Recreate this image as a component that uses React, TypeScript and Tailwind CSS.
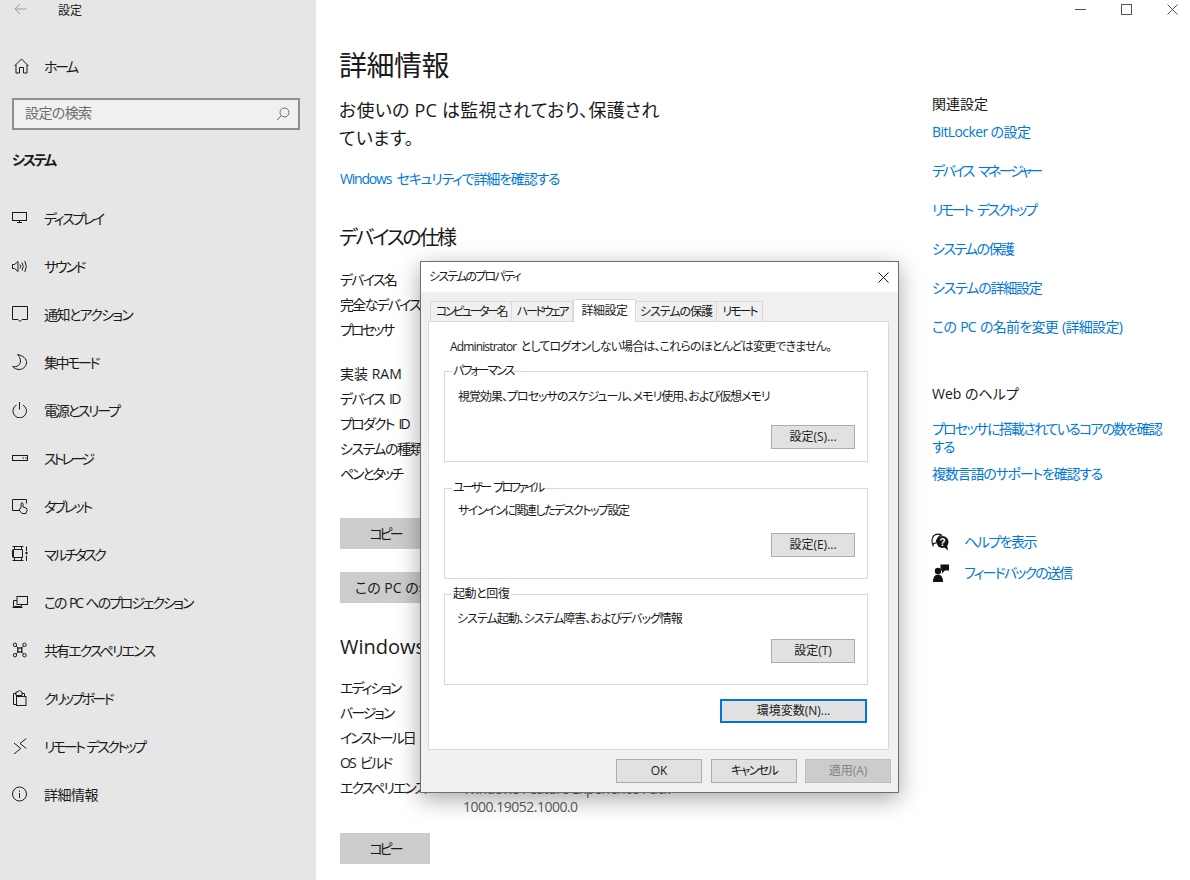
import React from "react";

const S = ({ children, w = 16, h = 16 }: { children: React.ReactNode; w?: number; h?: number }) => (
  <svg width={w} height={h} viewBox={`0 0 ${w} ${h}`} fill="none" stroke="#1a1a1a" strokeWidth="1" className="shrink-0">
    {children}
  </svg>
);

const nav: [string, React.ReactNode, string][] = [
  ["ディスプレイ", <S><rect x=".5" y="2.5" width="14" height="8" /><path d="M7.5 10.500v2M5 12.500h5" /></S>, "tracking-[-2.400px]"],
  ["サウンド", <S><path d="M.5 6.500h2L6 3.500v10l-3.500-3H.5z" /><path d="M8 6.500q1.500 2 0 4M10 4.500q2.500 4 0 8M12.800 3q3 5.500 0 11" /></S>, "tracking-[-2.300px]"],
  ["通知とアクション", <S><path d="M.5.5h15v13h-5.500L8 15.500 6 13.500H.5z" /></S>, "tracking-[-1.600px]"],
  ["集中モード", <S><path d="M5.500.5C11 1.500 15 5 14.500 9 14 13 10.500 15.500 7 15.500 4 15.500 2 14 .7 12.500 5 13.500 8.500 11 8.500 7 8.500 4.500 7.500 2.500 5.500.5z" /></S>, "tracking-[-2.400px]"],
  ["電源とスリープ", <S><path d="M7.500 0v7.500" /><path d="M4.500 3a6.800 6.800 0 1 0 6.400 0" /></S>, "tracking-[-2.200px]"],
  ["ストレージ", <S><rect x=".5" y="5.500" width="15" height="5" /><path d="M10.500 8h1.500M13 8h1.500" /></S>, "tracking-[-3px]"],
  ["タブレット", <S><path d="M8 12.500H.5v-11h14v4" /><path d="M9 10V5.500q1-1.500 2 0V9l3 1q1.500 .7 1 2.500l-1 3h-4l-3-3.500q.2-1.500 2-1.500" fill="#e6e6e6" /></S>, "tracking-[-2.400px]"],
  ["マルチタスク", <S><path d="M.5.5h11M.5 14.500h11M1.500 3.500h9v8h-9zM.5 3.500v8M2.500 1v2.500M9.500 1v2.500M2.500 11.500v3M9.500 11.500v3" /><path d="M14.500.5v4.500M14.500 9.500v5.500" /><circle cx="14.500" cy="7" r="1.200" fill="#1a1a1a" stroke="none" /></S>, "tracking-[-2.600px]"],
  ["この PC へのプロジェクション", <S><rect x="5" y="2.500" width="10.500" height="8" /><path d="M5 6.500H1.500v6h8V10.500M.5 13.500h10" /></S>, "tracking-[-2.100px] [word-spacing:2px]"],
  ["共有エクスペリエンス", <S><circle cx="3" cy="2.800" r="1.700" /><circle cx="12.500" cy="2.800" r="1.700" /><circle cx="3" cy="13.200" r="1.700" /><circle cx="12.500" cy="13.200" r="1.700" /><rect x="5.800" y="6" width="4" height="4" strokeWidth="1.300" /><path d="M4.200 4.200l2 2M11.300 4.200l-2 2M4.200 11.800l2-2M11.300 11.800l-2-2" /></S>, "tracking-[-1.900px]"],
  ["クリップボード", <S><path d="M4 3.500H1.500v11H4M10 3.500h2.500V6" /><path d="M4 3.500V2h2q.5-1.500 1.500-1.500T9.500 2H10v3.500H4z" /><rect x="4.500" y="6.500" width="9.500" height="9" /></S>, "tracking-[-2.600px]"],
  ["リモート デスクトップ", <S><path d="M2 5l6.800 5.500L2 16" /><path d="M14.300.5 8 5.500l6.300 5" /></S>, "tracking-[-2.500px] [word-spacing:2px]"],
  ["詳細情報", <S><circle cx="7.500" cy="8" r="7" /><path d="M7.500 7v5M7.500 4.500v1.200" /></S>, "tracking-[-0.5px]"],
];

const Btn = ({ label, w = "w-[84px]", t = "" }: { label: string; w?: string; t?: string }) => (
  <div className={`${w} ${t} h-6 border border-[#adadad] bg-[#e1e1e1] flex items-center justify-center text-[12px] text-[#1a1a1a]`}>{label}</div>
);

const Group = ({ legend, lt, text, tt, btn, mt, bt, bp }: { legend: string; lt: string; text: string; tt: string; btn: string; mt: string; bt: string; bp: string }) => (
  <div className={`relative h-[91px] ${mt} border border-[#d9d9d9] pl-[13px] pr-3`}>
    <div className={`absolute -top-[10px] left-[7px] bg-white px-[1px] text-[12px] leading-[18px] text-[#1a1a1a] whitespace-nowrap ${lt}`}>{legend}</div>
    <div className={`${bt} text-[12px] leading-[18px] text-[#1a1a1a] whitespace-nowrap ${tt}`}>{text}</div>
    <div className={`flex justify-end absolute right-3 ${bp}`}><Btn label={btn} /></div>
  </div>
);

const Row = ({ children, t = "" }: { children: React.ReactNode; t?: string }) => (
  <div className={`h-[25px] leading-[25px] text-[14px] text-[#1a1a1a] whitespace-nowrap ${t}`}>{children}</div>
);

const Link = ({ children, c = "" }: { children: React.ReactNode; c?: string }) => (
  <div className={`text-[14px] leading-[18px] text-[#0078d7] whitespace-nowrap ${c}`}>{children}</div>
);

export default function App() {
  return (
    <div className="relative flex h-[880px] w-[1190px] overflow-hidden bg-white font-['Open_Sans','Noto_Sans_CJK_JP',sans-serif] [font-feature-settings:'palt'] text-black">
      {/* sidebar */}
      <aside className="w-[316px] shrink-0 bg-[#e6e6e6] flex flex-col">
        <div className="h-[22px] flex items-center pl-[14px]">
          <svg width="13" height="12" viewBox="0 0 13 12" fill="none" stroke="#9a9a9a" strokeWidth="1" className="-mt-[4px]"><path d="M12.500 6H1M6 1 1 6l5 5" /></svg>
          <span className="ml-[31px] text-[12px] text-[#1a1a1a]">設定</span>
        </div>
        <div className="mt-[32px] h-6 flex items-center pl-[14px]">
          <svg width="15" height="16" viewBox="0 0 15 16" fill="none" stroke="#1a1a1a" strokeWidth="1"><path d="M.5 8 7.500 1l7 7M2 6.800V15h3.500V9.500h4V15H13V6.800" /></svg>
          <span className="ml-[15px] text-[14px] text-[#1a1a1a] tracking-[-2.500px]">ホーム</span>
        </div>
        <div className="mt-[20px] ml-3 w-[288px] h-8 border-2 border-[#8f8f8f] bg-[#f0f0f0] flex items-center justify-between pl-[11px] pr-2">
          <span className="text-[14px] tracking-[-0.6px] text-[#6b6b6b] -mt-[3px]">設定の検索</span>
          <svg width="14" height="14" viewBox="0 0 14 14" fill="none" stroke="#6b6b6b" strokeWidth="1"><circle cx="8.500" cy="5.500" r="4.500" /><path d="M5.200 8.800.8 13.200" /></svg>
        </div>
        <div className="mt-[20px] ml-3 h-5 leading-5 text-[14px] font-bold text-[#1a1a1a] tracking-[-2.200px]">システム</div>
        <nav className="mt-[24px] flex flex-col">
          {nav.map(([label, icon, t]) => (
            <div key={label} className="h-12 flex items-center pl-3 gap-4 text-[14px] text-[#1a1a1a]">
              {icon}
              <span className={`whitespace-nowrap ${t}`}>{label}</span>
            </div>
          ))}
        </nav>
      </aside>

      {/* main column */}
      <main className="w-[616px] shrink-0 pl-6 pt-[46px]">
        <h1 className="-ml-[1px] text-[28px] leading-[38px] font-normal text-[#1a1a1a] tracking-[-0.5px]">詳細情報</h1>
        <p className="-ml-[1px] mt-[12px] text-[18px] leading-[28px] text-[#1a1a1a] tracking-[0.25px]">お使いの PC は監視されており、保護され<br />ています。</p>
        <div className="mt-[18px]"><Link c="tracking-[-1.200px] [word-spacing:3px]">Windows セキュリティで詳細を確認する</Link></div>
        <h2 className="-ml-[1px] mt-[36px] text-[20px] leading-[28px] font-normal text-[#1a1a1a] tracking-[-2.300px]">デバイスの仕様</h2>
        <div className="mt-[15px]">
          <Row t="tracking-[-1.800px]">デバイス名</Row>
          <Row t="tracking-[-1.800px]">完全なデバイス名</Row>
          <Row t="tracking-[-2.200px]">プロセッサ</Row>
          <div className="h-[19px]" />
          <Row>実装 RAM</Row>
          <Row t="tracking-[-1.700px] [word-spacing:3px]">デバイス ID</Row>
          <Row t="tracking-[-1.800px] [word-spacing:3px]">プロダクト ID</Row>
          <Row t="tracking-[-1.500px]">システムの種類</Row>
          <Row t="tracking-[-2.200px]">ペンとタッチ</Row>
        </div>
        <div className="mt-[32px] w-[90px] h-[31px] bg-[#cccccc] flex items-center justify-center text-[14px] text-[#1a1a1a] tracking-[-3px]">コピー</div>
        <div className="mt-[23px] w-[164px] h-[31px] bg-[#cccccc] flex items-center pl-[15px] text-[14px] text-[#1a1a1a] whitespace-nowrap">この PC の名前</div>
        <h2 className="mt-[30px] text-[20px] leading-[28px] font-normal text-[#1a1a1a]">Windows の仕様</h2>
        <div className="mt-[14px]">
          <Row t="tracking-[-2px]">エディション</Row>
          <Row t="tracking-[-2px]">バージョン</Row>
          <Row t="tracking-[-2px]">インストール日</Row>
          <Row t="tracking-[-1.800px] [word-spacing:3px]">OS ビルド</Row>
          <div className="flex">
            <div className="w-[123px] h-[25px] leading-[25px] text-[14px] text-[#1a1a1a] whitespace-nowrap tracking-[-2px]">エクスペリエンス</div>
            <div className="text-[14px] leading-[18px] pt-[5px] text-[#5f5f5f] tracking-[-0.5px]">Windows Feature Experience Pack<br />1000.19052.1000.0</div>
          </div>
        </div>
        <div className="mt-[17px] w-[90px] h-[31px] bg-[#cccccc] flex items-center justify-center text-[14px] text-[#1a1a1a] tracking-[-3px]">コピー</div>
      </main>

      {/* right column */}
      <section className="flex-1 pt-[30px] pr-4">
        <div className="flex justify-end gap-[35px] h-[20px] -mt-[30px] mr-[-4px] items-start">
          <svg className="mt-[9px]" width="11" height="1" viewBox="0 0 11 1"><rect width="11" height="1" fill="#555" /></svg>
          <svg className="mt-[4px]" width="11" height="11" viewBox="0 0 11 11" fill="none" stroke="#555"><rect x=".5" y=".5" width="10" height="10" /></svg>
          <svg className="mt-[4px]" width="11" height="11" viewBox="0 0 11 11" fill="none" stroke="#555"><path d="M.5.5l10 10M10.500.5l-10 10" /></svg>
        </div>
        <div className="mt-[75px] text-[14px] leading-[18px] text-[#1a1a1a]">関連設定</div>
        <div className="mt-[10px] flex flex-col gap-[21px]">
          <Link c="tracking-[-0.6px]">BitLocker の設定</Link>
          <Link c="tracking-[-2.500px] [word-spacing:4px]">デバイス マネージャー</Link>
          <Link c="tracking-[-2.400px] [word-spacing:4px]">リモート デスクトップ</Link>
          <Link c="tracking-[-1.600px]">システムの保護</Link>
          <Link c="tracking-[-1.200px]">システムの詳細設定</Link>
          <Link c="tracking-[-0.7px] [word-spacing:1px]">この PC の名前を変更 (詳細設定)</Link>
        </div>
        <div className="mt-[49px] text-[14px] leading-[18px] text-[#1a1a1a]">Web のヘルプ</div>
        <div className="mt-[17px]"><Link c="tracking-[-1.800px]">プロセッサに搭載されているコアの数を確認<br />する</Link></div>
        <div className="mt-[9px]"><Link c="tracking-[-1.200px]">複数言語のサポートを確認する</Link></div>
        <div className="mt-[49px] -ml-[1px] flex items-center gap-[15px] h-[20px]">
          <svg width="18" height="18" viewBox="0 0 18 18" className="shrink-0"><path d="M2 12.500 Q-.5 6 3 2.500 Q7 .1 10.500 2 Q6 4 5 10 L2.500 10.500z" fill="#fff" stroke="#111" strokeWidth="1.100" /><circle cx="11.500" cy="9" r="6" fill="#111" /><path d="M13 14l4 3.500-1-6z" fill="#111" /><text x="11.500" y="12.500" fontSize="10" fill="#fff" textAnchor="middle" fontWeight="700" fontFamily="'Liberation Sans',sans-serif">?</text></svg>
          <Link c="tracking-[-1.500px]">ヘルプを表示</Link>
        </div>
        <div className="mt-[11px] -ml-[1px] flex items-center gap-[15px] h-[20px]">
          <svg width="18" height="18" viewBox="0 0 18 18" fill="#111" className="shrink-0"><circle cx="7" cy="7" r="3.200" /><path d="M2 18q0-7.500 5-7.500t5 7.500z" /><path d="M9.500.5H18v6h-4l-3 3v-3H9.500z" /></svg>
          <Link c="tracking-[-1.800px]">フィードバックの送信</Link>
        </div>
      </section>

      {/* dialog */}
      <div className="absolute left-[420px] top-[261px] w-[479px] h-[532px] bg-[#f0f0f0] border border-[#6e6e6e] shadow-[0_6px_22px_rgba(0,0,0,0.35)] flex flex-col">
        <div className="h-[30px] bg-white flex items-center justify-between pl-2 pr-[9px] text-[12px] text-[#1a1a1a]">
          <span className="tracking-[-1.800px]">システムのプロパティ</span>
          <svg width="11" height="11" viewBox="0 0 11 11" fill="none" stroke="#111"><path d="M.5.5l10 10M10.500.5l-10 10" /></svg>
        </div>
        <div className="ml-[9px] mt-[8px] h-[22px] flex items-end text-[12px] text-[#1a1a1a] relative z-10 -mb-[1px]">
          <div className="h-[21px] w-[82px] border border-[#d9d9d9] border-b-0 flex items-center justify-center whitespace-nowrap tracking-[-2.400px]">コンピューター名</div>
          <div className="h-[21px] w-[61px] border border-[#d9d9d9] border-b-0 border-l-0 flex items-center justify-center whitespace-nowrap tracking-[-2.400px]">ハードウェア</div>
          <div className="h-[23px] w-[63px] border border-[#d9d9d9] border-b-0 bg-white flex items-center justify-center whitespace-nowrap tracking-[-0.5px]">詳細設定</div>
          <div className="h-[21px] w-[81px] border border-[#d9d9d9] border-b-0 border-l-0 flex items-center justify-center whitespace-nowrap tracking-[-1px]">システムの保護</div>
          <div className="h-[21px] w-[46px] border border-[#d9d9d9] border-b-0 border-l-0 flex items-center justify-center whitespace-nowrap tracking-[-2px]">リモート</div>
        </div>
        <div className="ml-[7px] w-[461px] h-[429px] bg-white border border-[#d9d9d9] pl-[15px] pr-5 flex flex-col">
          <div className="mt-[16px] pl-[6px] text-[12px] leading-[18px] text-[#1a1a1a] whitespace-nowrap tracking-[-0.85px] [word-spacing:2px]">Administrator としてログオンしない場合は、これらのほとんどは変更できません。</div>
          <Group legend="パフォーマンス" lt="tracking-[-2px]" text="視覚効果、プロセッサのスケジュール、メモリ使用、および仮想メモリ" tt="tracking-[-1px]" btn="設定(S)..." mt="mt-[15px]" bt="mt-[16px]" bp="bottom-3" />
          <Group legend="ユーザー プロファイル" lt="tracking-[-2.500px] [word-spacing:3px]" text="サインインに関連したデスクトップ設定" tt="tracking-[-1.500px]" btn="設定(E)..." mt="mt-[26px]" bt="mt-[13px]" bp="bottom-[21px]" />
          <Group legend="起動と回復" lt="tracking-[-0.4px]" text="システム起動、システム障害、およびデバッグ情報" tt="-ml-[1px] tracking-[-1px]" btn="設定(T)" mt="mt-[15px]" bt="mt-[15px]" bp="bottom-[21px]" />
          <div className="mt-[14px] flex justify-end pr-[1px]">
            <div className="w-[147px] h-[24px] border-2 border-[#0078d7] bg-[#e1e1e1] flex items-center justify-center text-[12px] text-[#1a1a1a]">環境変数(N)...</div>
          </div>
        </div>
        <div className="mt-[9px] flex justify-end gap-[8px] pr-[7px]">
          <Btn label="OK" w="w-[86px] mr-[1px]" />
          <Btn label="キャンセル" w="w-[86px]" t="tracking-[-1.600px]" />
          <div className="w-[86px] h-6 border border-[#bfbfbf] bg-[#cccccc] flex items-center justify-center text-[12px] text-[#838383]">適用(A)</div>
        </div>
      </div>
    </div>
  );
}
